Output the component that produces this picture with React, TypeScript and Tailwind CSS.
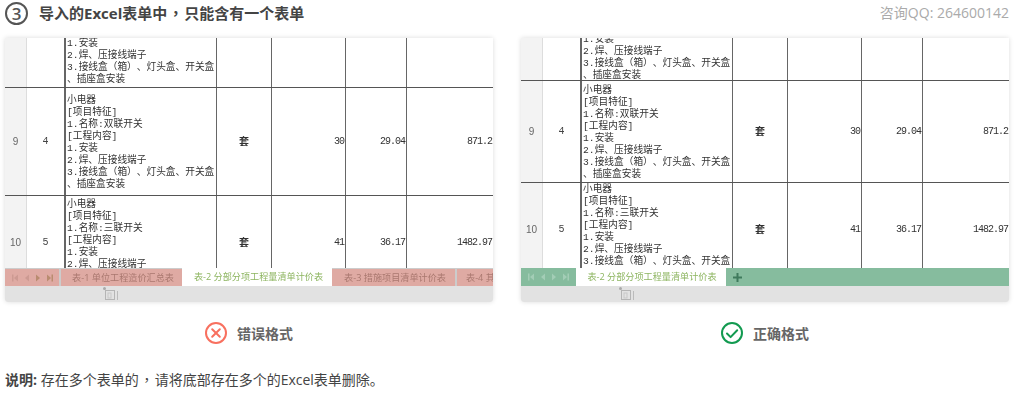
const firstLines = ["1.安装", "2.焊、压接线端子", "3.接线盒（箱）、灯头盒、开关盒", "、插座盒安装"];

const colsClass = "grid shrink-0 grid-cols-[22px_39px_151px_55px_74px_61px_86px] border-b border-[#555]";
const descClass =
  "overflow-hidden border-r border-[#666] pl-[1px] font-['Liberation_Mono','Noto_Sans_CJK_SC',monospace] text-[9.7px] leading-[12px] whitespace-nowrap text-[#333] [text-spacing-trim:space-all]";

function Desc({ name, lines }: { name: string; lines: string[] }) {
  return (
    <>
      <div>小电器</div>
      <div>[项目特征]</div>
      <div>1.名称:{name}</div>
      <div>[工程内容]</div>
      {lines.map((l) => (
        <div key={l}>{l}</div>
      ))}
    </>
  );
}

function Num({ children }: { children: string }) {
  return (
    <div className="flex items-center justify-end overflow-hidden border-r border-[#666] pr-[1px] font-['Liberation_Mono',monospace] text-[10px] tracking-[-1px] text-[#333]">
      {children}
    </div>
  );
}

function Row({
  no,
  seq,
  name,
  lines,
  qty,
  price,
  total,
  height,
  pad,
}: {
  no: string;
  seq: string;
  name: string;
  lines: string[];
  qty: string;
  price: string;
  total: string;
  height: string;
  pad: string;
}) {
  return (
    <div className={`${colsClass} ${height}`}>
      <div className="flex items-center justify-center border-r border-[#ddd] bg-[#f3f3f3] font-['Liberation_Sans',sans-serif] text-[10px] text-[#666]">
        {no}
      </div>
      <div className="flex items-center justify-center border-r-2 border-[#666] font-['Liberation_Mono',monospace] text-[10px] text-[#444]">
        {seq}
      </div>
      <div className={`${descClass} ${pad}`}>
        <Desc name={name} lines={lines} />
      </div>
      <div className="flex items-center justify-center border-r border-[#666] text-[10px] font-bold text-[#333]">套</div>
      <Num>{qty}</Num>
      <Num>{price}</Num>
      <div className="flex items-center justify-end overflow-hidden pr-[1px] font-['Liberation_Mono',monospace] text-[10px] tracking-[-1px] whitespace-nowrap text-[#333]">
        {total}
      </div>
    </div>
  );
}

function TopRow({ height, offset }: { height: string; offset: string }) {
  return (
    <div className={`${colsClass} ${height}`}>
      <div className="border-r border-[#ddd] bg-[#f3f3f3]" />
      <div className="border-r-2 border-[#666]" />
      <div className={`flex flex-col justify-end ${descClass}`}>
        <div className={offset}>
          {firstLines.map((l) => (
            <div key={l}>{l}</div>
          ))}
        </div>
      </div>
      <div className="border-r border-[#666]" />
      <div className="border-r border-[#666]" />
      <div className="border-r border-[#666]" />
      <div />
    </div>
  );
}

function NavArrows({ color, strong }: { color: string; strong: string }) {
  return (
    <svg width="41" height="8" viewBox="0 0 41 8" className="shrink-0">
      <g fill={color}>
        <rect x="0" y="0.5" width="1.5" height="7" />
        <path d="M6 0.5v7L2 4z" />
        <path d="M17 0.5v7l-4-3.5z" />
      </g>
      <g fill={strong}>
        <path d="M24 0.5v7l4-3.5z" />
        <path d="M35 0.5v7l4-3.5z" />
        <rect x="39.5" y="0.5" width="1.5" height="7" />
      </g>
    </svg>
  );
}

function BottomBar() {
  return (
    <div className="flex h-[16px] items-center bg-[#e2e2e2] pl-[98px]">
      <svg width="16" height="14" viewBox="0 0 16 14" fill="none">
        <rect x="2.5" y="3.5" width="9" height="9" stroke="#b5b5b5" />
        <rect x="5" y="6" width="3" height="5" stroke="#c8c8c8" />
        <circle cx="1.5" cy="1.5" r="1.5" fill="#aaa" />
        <path d="M14.5 4v9" stroke="#bbb" />
      </svg>
    </div>
  );
}

function ErrorTabs() {
  return (
    <div className="flex h-[18px] overflow-hidden bg-[#ccc] text-[9.15px] whitespace-nowrap text-[#a9786f]">
      <div className="flex w-[54px] shrink-0 items-center justify-center border-t border-[#ccc] bg-[#dfaaa3]">
        <NavArrows color="#cd9a92" strong="#b98c70" />
      </div>
      <div className="ml-[2px] flex w-[121px] shrink-0 items-center justify-center border-t border-[#ccc] bg-[#dfaaa3] pl-[3px]">
        表-1 单位工程造价汇总表
      </div>
      <div className="flex w-[150px] shrink-0 items-center justify-center bg-white pl-[3px] text-[#8db560]">表-2 分部分项工程量清单计价表</div>
      <div className="flex w-[123px] shrink-0 items-center justify-center border-t border-[#ccc] bg-[#dfaaa3] pl-[3px]">
        表-3 措施项目清单计价表
      </div>
      <div className="ml-[2px] flex grow items-center overflow-hidden border-t border-[#ccc] bg-[#dfaaa3] pl-[9px]">表-4 其他</div>
    </div>
  );
}

function OkTabs() {
  return (
    <div className="flex h-[18px] items-stretch bg-[#86bc9e] text-[9.15px] whitespace-nowrap">
      <div className="flex w-[55px] shrink-0 items-center justify-center">
        <NavArrows color="#a3cdb6" strong="#a3cdb6" />
      </div>
      <div className="flex w-[150px] shrink-0 items-center justify-center bg-white pl-[2px] text-[#8db560]">表-2 分部分项工程量清单计价表</div>
      <div className="flex items-center pl-[7px]">
        <svg width="9" height="9" viewBox="0 0 9 9" fill="#3f7a5c">
          <rect x="3.5" y="0" width="2" height="9" />
          <rect x="0" y="3.5" width="9" height="2" />
        </svg>
      </div>
    </div>
  );
}

function Panel({ children, tabs }: { children: React.ReactNode; tabs: React.ReactNode }) {
  return (
    <div className="flex h-[264px] w-[488px] flex-col overflow-hidden rounded-b-[3px] bg-white shadow-[0_0_5px_rgba(0,0,0,0.14)]">
      <div className="flex h-[230px] flex-col overflow-hidden blur-[0.35px]">{children}</div>
      <div className="blur-[0.35px]">
        {tabs}
        <BottomBar />
      </div>
    </div>
  );
}

function Verdict({ ok, label }: { ok: boolean; label: string }) {
  return (
    <div className="flex w-[488px] items-center justify-center gap-[10px] text-[14px] font-bold text-[#666]">
      {ok ? (
        <svg width="22" height="22" viewBox="0 0 22 22" fill="none" stroke="#129a50" strokeWidth="2">
          <circle cx="11" cy="11" r="10" />
          <path d="M6 11.5l3.6 3.6L16.2 8.2" strokeLinecap="round" strokeLinejoin="round" />
        </svg>
      ) : (
        <svg width="22" height="22" viewBox="0 0 22 22" fill="none" stroke="#f8705f" strokeWidth="2">
          <circle cx="11" cy="11" r="10" />
          <path d="M7.2 7.2l7.6 7.6M14.8 7.2l-7.6 7.6" strokeLinecap="round" />
        </svg>
      )}
      <span>{label}</span>
    </div>
  );
}

export default function App() {
  const row9Lines = firstLines;
  const row10Lines = firstLines.slice(0, 3);

  return (
    <div className="h-[412px] w-[1014px] overflow-hidden bg-white font-['Open_Sans','Noto_Sans_CJK_SC',sans-serif]">
      <div className="flex h-[38px] items-start justify-between pt-[1px] pr-[5px] pl-[5px]">
        <div className="flex items-center gap-[11px]">
          <div className="flex h-[23px] w-[23px] items-center justify-center rounded-full border-2 border-[#555] text-[17px] leading-none font-semibold text-[#555]">
            3
          </div>
          <h1 className="text-[15px] leading-[23px] font-bold text-[#444]">
            导入的Excel表单中<span className="px-[1px] font-['Noto_Sans_CJK_TC',sans-serif]">，</span>只能含有一个表单
          </h1>
        </div>
        <div className="text-[14px] leading-[23px] text-[#aaa]">咨询QQ: 264600142</div>
      </div>

      <div className="flex gap-[28px] pl-[5px]">
        <Panel tabs={<ErrorTabs />}>
          <TopRow height="h-[50px]" offset="mb-[1px]" />
          <Row no="9" seq="4" name="双联开关" lines={row9Lines} qty="30" price="29.04" total="871.2" height="h-[108px]" pad="pt-[7px]" />
          <Row no="10" seq="5" name="三联开关" lines={row10Lines} qty="41" price="36.17" total="1482.97" height="h-[94px]" pad="pt-[3px]" />
        </Panel>
        <Panel tabs={<OkTabs />}>
          <TopRow height="h-[43px]" offset="mb-[-2px]" />
          <Row no="9" seq="4" name="双联开关" lines={row9Lines} qty="30" price="29.04" total="871.2" height="h-[102px]" pad="pt-[4px]" />
          <Row no="10" seq="5" name="三联开关" lines={row10Lines} qty="41" price="36.17" total="1482.97" height="h-[94px]" pad="pt-[1px]" />
        </Panel>
      </div>

      <div className="mt-[20px] flex gap-[28px] pl-[5px]">
        <Verdict ok={false} label="错误格式" />
        <Verdict ok label="正确格式" />
      </div>

      <p className="mt-[25px] pl-[5px] text-[14px] leading-[20px] text-[#444]">
        <strong className="font-bold">说明:</strong> 存在多个表单的<span className="px-[1px] font-['Noto_Sans_CJK_TC',sans-serif]">，</span>请将底部存在多个的Excel表单删除。
      </p>
    </div>
  );
}
